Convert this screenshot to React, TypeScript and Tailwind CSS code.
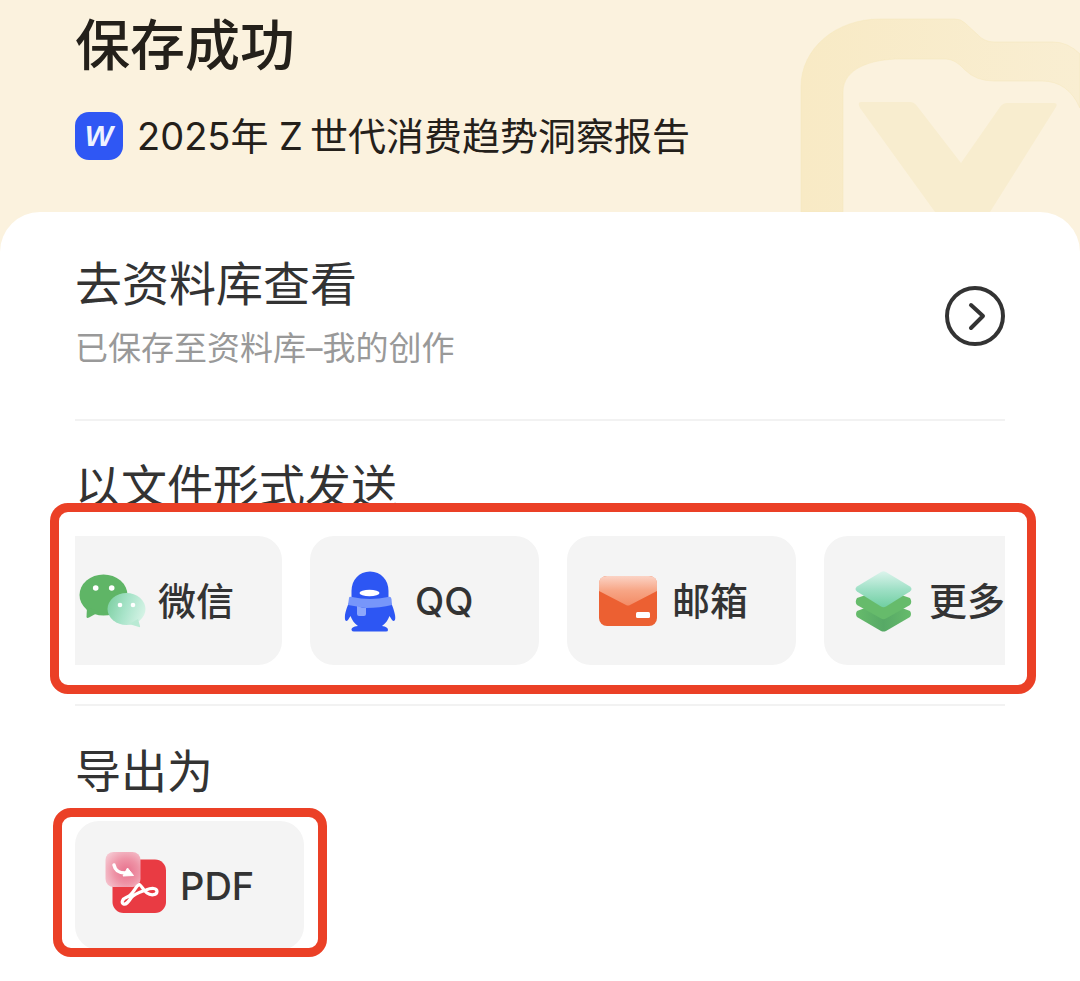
import type { ReactNode } from 'react';

interface ActionChipProps {
  label: string;
  icon: ReactNode;
}

function WeChatIcon() {
  return (
    <svg viewBox="0 0 60 60" className="w-[60px] h-[60px] shrink-0 overflow-visible" aria-hidden="true">
      <defs>
        <linearGradient id="wechat-front" x1="0" y1="0.3" x2="1" y2="0.6">
          <stop offset="0" stopColor="#7fd0a3" />
          <stop offset="0.5" stopColor="#a9e4ca" />
          <stop offset="1" stopColor="#d6f3e6" />
        </linearGradient>
      </defs>
      <ellipse cx="20.5" cy="24" rx="24" ry="20.5" fill="#5fb566" />
      <path d="M4 36L3.5 46Q4 47.5 6 46.5L16 41Z" fill="#5fb566" />
      <circle cx="12.7" cy="17" r="2.8" fill="#fff" />
      <circle cx="28.7" cy="17" r="2.8" fill="#fff" />
      <ellipse cx="43.5" cy="38" rx="19" ry="16" fill="url(#wechat-front)" />
      <path d="M46 53L56 56Q57.5 56.5 57 55L55 48Z" fill="#b9ead4" />
      <circle cx="37" cy="34" r="2.3" fill="#fff" />
      <circle cx="50" cy="34" r="2.3" fill="#fff" />
    </svg>
  );
}

function QQIcon() {
  return (
    <svg viewBox="0 0 60 60" className="w-[60px] h-[60px] shrink-0 overflow-visible" aria-hidden="true">
      <path
        d="M30 0.5C19 0.5 11.5 9 11.5 20V27C9 31 6 38 5 44C4.5 50 6 51 8 49L10.5 45C12 49 14 52 18 55C13 55.5 11.5 57 11.5 59Q12 60.5 14 60.5H46Q48 60.5 48 59C48 57 46 55.5 42 55C46 52 48 49 49.5 45L52 49C54 51 56 50 55 44C54 38 51 31 48.5 27V20C48.5 9 41 0.5 30 0.5Z"
        fill="#2d56f3"
      />
      <ellipse cx="29.5" cy="22" rx="10" ry="3.2" fill="#fff" />
      <path d="M9 27Q9 25 12 26Q30 30 48 26Q51 25 51.5 28L52 34Q40 37 26 37L8 34Z" fill="#7796fa" />
      <path d="M17 35Q22 37 26 37V43Q26 45 24 45H19Q17 45 17 43Z" fill="#8da7fb" />
    </svg>
  );
}

function MailIcon() {
  return (
    <svg viewBox="0 0 60 60" className="w-[60px] h-[60px] shrink-0" aria-hidden="true">
      <defs>
        <linearGradient id="mail-flap" x1="0" y1="0" x2="0" y2="1">
          <stop offset="0" stopColor="#fbd3c5" />
          <stop offset="0.5" stopColor="#f7a585" />
          <stop offset="1" stopColor="#f38c66" />
        </linearGradient>
      </defs>
      <rect x="2" y="5" width="58" height="50" rx="8" fill="#ec6032" />
      <path d="M2 13Q2 5 10 5H52Q60 5 60 13V20L33 34Q31 35 29 34L2 20Z" fill="url(#mail-flap)" />
      <rect x="39" y="41" width="14" height="6" rx="1.5" fill="#fff" />
    </svg>
  );
}

function LayersIcon() {
  return (
    <svg viewBox="0 0 60 60" className="w-[60px] h-[60px] shrink-0 overflow-visible" aria-hidden="true">
      <defs>
        <linearGradient id="layer-top" x1="0" y1="0" x2="0" y2="1">
          <stop offset="0" stopColor="#dcf4ec" />
          <stop offset="0.5" stopColor="#9fe0c6" />
          <stop offset="1" stopColor="#70cfa2" />
        </linearGradient>
        <linearGradient id="layer-mid" x1="0" y1="0" x2="1" y2="0">
          <stop offset="0" stopColor="#66bb6b" />
          <stop offset="0.5" stopColor="#57a966" />
          <stop offset="1" stopColor="#66bb6b" />
        </linearGradient>
      </defs>
      <path d="M3 40Q1 43 3 46L27 60Q29.5 61 32 60L56 46Q58 43 56 40L29.5 30Z" fill="url(#layer-mid)" />
      <path d="M3 27Q0.5 31 3 34L27 47.5Q29.5 49 32 47.5L56 34Q58.5 31 56 27L29.5 18Z" fill="#66bb6b" />
      <path d="M27 1Q29.5 -0.5 32 1L56 15.5Q59 18 56 20.5L32 35.5Q29.5 37 27 35.5L3 20.5Q0 18 3 15.5Z" fill="url(#layer-top)" />
    </svg>
  );
}

function PdfIcon() {
  return (
    <svg viewBox="0 0 60 60" className="w-[60px] h-[60px] shrink-0 overflow-visible" aria-hidden="true">
      <defs>
        <radialGradient id="pdf-badge" cx="0.6" cy="0.55" r="0.7">
          <stop offset="0" stopColor="#e8718d" />
          <stop offset="0.5" stopColor="#ee93a6" />
          <stop offset="1" stopColor="#f5c6d0" />
        </radialGradient>
      </defs>
      <rect x="7.5" y="3.5" width="53.5" height="53.5" rx="11" fill="#e93b43" />
      <rect x="0.5" y="-4" width="35" height="35" rx="8" fill="url(#pdf-badge)" />
      <path d="M9 9C10 14 14 17 20 17" fill="none" stroke="#fff" strokeWidth="3.5" strokeLinecap="round" />
      <path d="M22.5 12L28.5 19.5L18 20Z" fill="#fff" stroke="#fff" strokeLinejoin="round" />
      <path
        d="M34.5 28.5C37 30 38 34 42 37C46 40 52 39 52 35.5C52 32 47 31.5 41 34C34 36.5 29 38 26 42C23 46.5 21 49 18.5 48C16 47 17 43 22 41C29 38 30 30 34.5 28.5Z"
        fill="none"
        stroke="#fff"
        strokeWidth="3.2"
        strokeLinejoin="round"
      />
    </svg>
  );
}

function FolderArt() {
  return (
    <svg viewBox="0 0 280 212" className="absolute top-0 right-0 w-[280px] h-[212px]" aria-hidden="true">
      <defs>
        <linearGradient id="folder-tint" x1="0" y1="0" x2="1" y2="0">
          <stop offset="0" stopColor="#f8eac5" />
          <stop offset="1" stopColor="#f9eed2" />
        </linearGradient>
      </defs>
      <path
        d="M1 212V87C1 48 36 19 80 19H155Q161 19 165 23L177 34Q184 42 194 42H253Q268 42 280 54V108Q268 81 242 81H194Q176 81 165 70Q155 59 146 59H100C72 59 43 68 43 92V212Z"
        fill="url(#folder-tint)"
        stroke="#f6e7bb"
        strokeOpacity="0.5"
      />
      <path d="M61 102H110Q114 102 117 106L161 163L200 107Q203 103 207 103H254Q258 103 256 107L190 212H135L60 108Q57 102 61 102Z" fill="#f8edcf" />
    </svg>
  );
}

function ActionChip({ label, icon }: ActionChipProps) {
  return (
    <button
      type="button"
      className="flex items-center gap-[15px] w-[229px] h-[129px] shrink-0 pl-[30px] rounded-3xl bg-[#f4f4f4] text-[38px] leading-[48px] font-medium whitespace-nowrap"
    >
      {icon}
      {label}
    </button>
  );
}

const sendTargets = [
  { label: '微信', icon: <WeChatIcon /> },
  { label: 'QQ', icon: <QQIcon /> },
  { label: '邮箱', icon: <MailIcon /> },
  { label: '更多', icon: <LayersIcon /> },
];

export default function App() {
  return (
    <div className="min-h-screen flex flex-col bg-[#fbf2de] text-[#333333] font-['Inter','Noto_Sans_CJK_SC',sans-serif]">
      <header className="relative px-[75px] pt-[17px] pb-[52px] text-[#24201a]">
        <FolderArt />
        <h1 className="relative text-[55px] leading-[56px] font-medium">保存成功</h1>
        <div className="relative flex items-center gap-[14px] mt-[39px]">
          <span className="flex items-center justify-center w-12 h-12 shrink-0 rounded-[14px] bg-[#2f57f4] text-[#eef2ff] text-[30px] leading-8 font-bold italic font-['Liberation_Sans',sans-serif]">
            W
          </span>
          <p className="text-[38px] leading-[48px] whitespace-nowrap">2025年 Z{'\u2009'}世代消费趋势洞察报告</p>
        </div>
      </header>

      <main className="flex-1 px-[75px] pb-[30px] rounded-t-[40px] bg-white">
        <section className="flex items-center justify-between pt-12 pb-[47px] border-b-2 border-[#f2f2f2]">
          <div>
            <h2 className="text-[47px] leading-[48px]">去资料库查看</h2>
            <p className="mt-4 text-[33px] leading-[48px] text-[#999999]">已保存至资料库–我的创作</p>
          </div>
          <button type="button" aria-label="去资料库查看" className="shrink-0">
            <svg viewBox="0 0 60 60" className="w-[60px] h-[60px]" fill="none" stroke="#333333" strokeWidth="4">
              <circle cx="30" cy="30" r="28" />
              <path d="M26 19L38 30L26 42" strokeLinecap="round" strokeLinejoin="round" />
            </svg>
          </button>
        </section>

        <section className="pt-[41px] pb-[39px] border-b-2 border-[#f2f2f2]">
          <h2 className="text-[46px] leading-[48px]">以文件形式发送</h2>
          <div className="relative mt-[26px]">
            <div className="overflow-hidden">
              <div className="flex gap-7 -ml-[22px]">
                {sendTargets.map((target) => (
                  <ActionChip key={target.label} label={target.label} icon={target.icon} />
                ))}
              </div>
            </div>
            {/* highlight frame */}
            <div className="absolute -top-[33px] -bottom-[29px] -left-[25px] -right-[31px] border-[9px] border-[#eb4026] rounded-[18px] pointer-events-none" />
          </div>
        </section>

        <section className="pt-[41px]">
          <h2 className="text-[46px] leading-[48px]">导出为</h2>
          <div className="relative w-fit mt-[26px]">
            <ActionChip label="PDF" icon={<PdfIcon />} />
            <div className="absolute -top-[13px] -bottom-[7px] -left-[22px] -right-[23px] border-[9px] border-[#eb4026] rounded-[18px] pointer-events-none" />
          </div>
        </section>
      </main>
    </div>
  );
}
